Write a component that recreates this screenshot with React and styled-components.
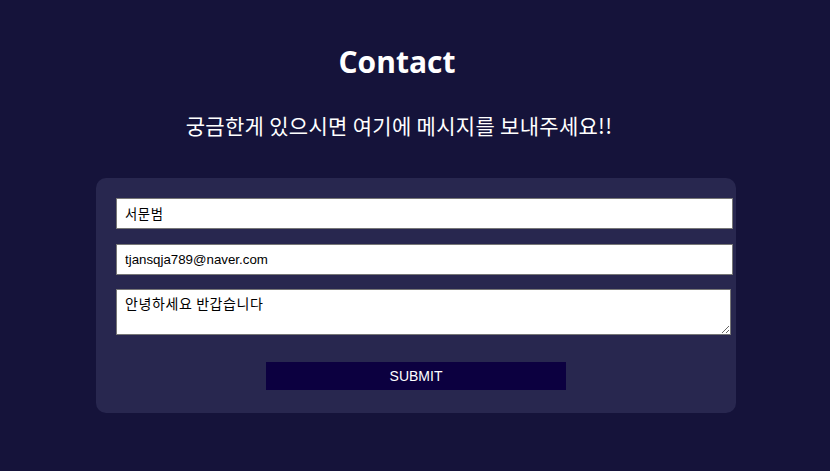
import React from "react";
import styled, { createGlobalStyle } from "styled-components";

const Global = createGlobalStyle`
  html, body { margin: 0; padding: 0; background: #15133a; }
  body { font-family: "Open Sans", "Noto Sans CJK KR", sans-serif; }
  * { box-sizing: border-box; }
`;

const Page = styled.div`
  width: 830px;
  height: 471px;
  background: #15133a;
  display: flex;
  flex-direction: column;
  align-items: center;
  overflow: hidden;
`;

const Header = styled.header`
  width: 100%;
  padding-right: 36px;
  display: flex;
  flex-direction: column;
  align-items: center;
`;

const Title = styled.h1`
  margin: 40px 0 0;
  font-family: "Open Sans", "Noto Sans", sans-serif;
  font-weight: 700;
  font-size: 30px;
  line-height: 44px;
  color: #ffffff;
`;

const Subtitle = styled.p`
  margin: 27px 0 0 4px;
  font-family: "Noto Sans CJK KR", "Noto Sans", sans-serif;
  font-size: 21px;
  letter-spacing: 0.3px;
  line-height: 28px;
  color: #ffffff;
`;

const Card = styled.form`
  margin-top: 39px;
  margin-left: 2px;
  width: 640px;
  padding: 20px 20px 23px;
  background: #28274f;
  border-radius: 10px;
  display: flex;
  flex-direction: column;
  align-items: flex-start;
`;

const Field = styled.input`
  width: 617px;
  height: 31px;
  margin-bottom: ${(p) => p.$gap}px;
  padding: 0 8px;
  border: 1px solid #767676;
  background: #fff;
  color: #000;
  font-family: ${(p) => (p.$korean ? '"Noto Sans CJK KR", sans-serif' : '"Liberation Sans", Arial, sans-serif')};
  letter-spacing: ${(p) => (p.$korean ? "0.6px" : "0")};
  font-size: 13.3px;
  outline: none;
`;

const Area = styled.textarea`
  width: 615px;
  height: 46px;
  padding: 5px 8px;
  border: 1px solid #767676;
  background: #fff;
  color: #000;
  font-family: "Noto Sans CJK KR", sans-serif;
  font-size: 14px;
  letter-spacing: 0.6px;
  line-height: 16px;
  resize: both;
  outline: none;
`;

const Submit = styled.button`
  align-self: center;
  margin-top: 27px;
  width: 300px;
  height: 28px;
  border: none;
  background: #0c0040;
  color: #fff;
  font-family: "Liberation Sans", Arial, sans-serif;
  font-size: 14px;
  cursor: pointer;
`;

export default function App() {
  return (
    <>
      <Global />
      <Page>
        <Header>
          <Title>Contact</Title>
          <Subtitle>궁금한게 있으시면 여기에 메시지를 보내주세요!!</Subtitle>
        </Header>
        <Card onSubmit={(e) => e.preventDefault()}>
          <Field $gap={15} $korean defaultValue="서문범" />
          <Field $gap={14} defaultValue="tjansqja789@naver.com" />
          <Area defaultValue="안녕하세요 반갑습니다" />
          <Submit type="submit">SUBMIT</Submit>
        </Card>
      </Page>
    </>
  );
}
